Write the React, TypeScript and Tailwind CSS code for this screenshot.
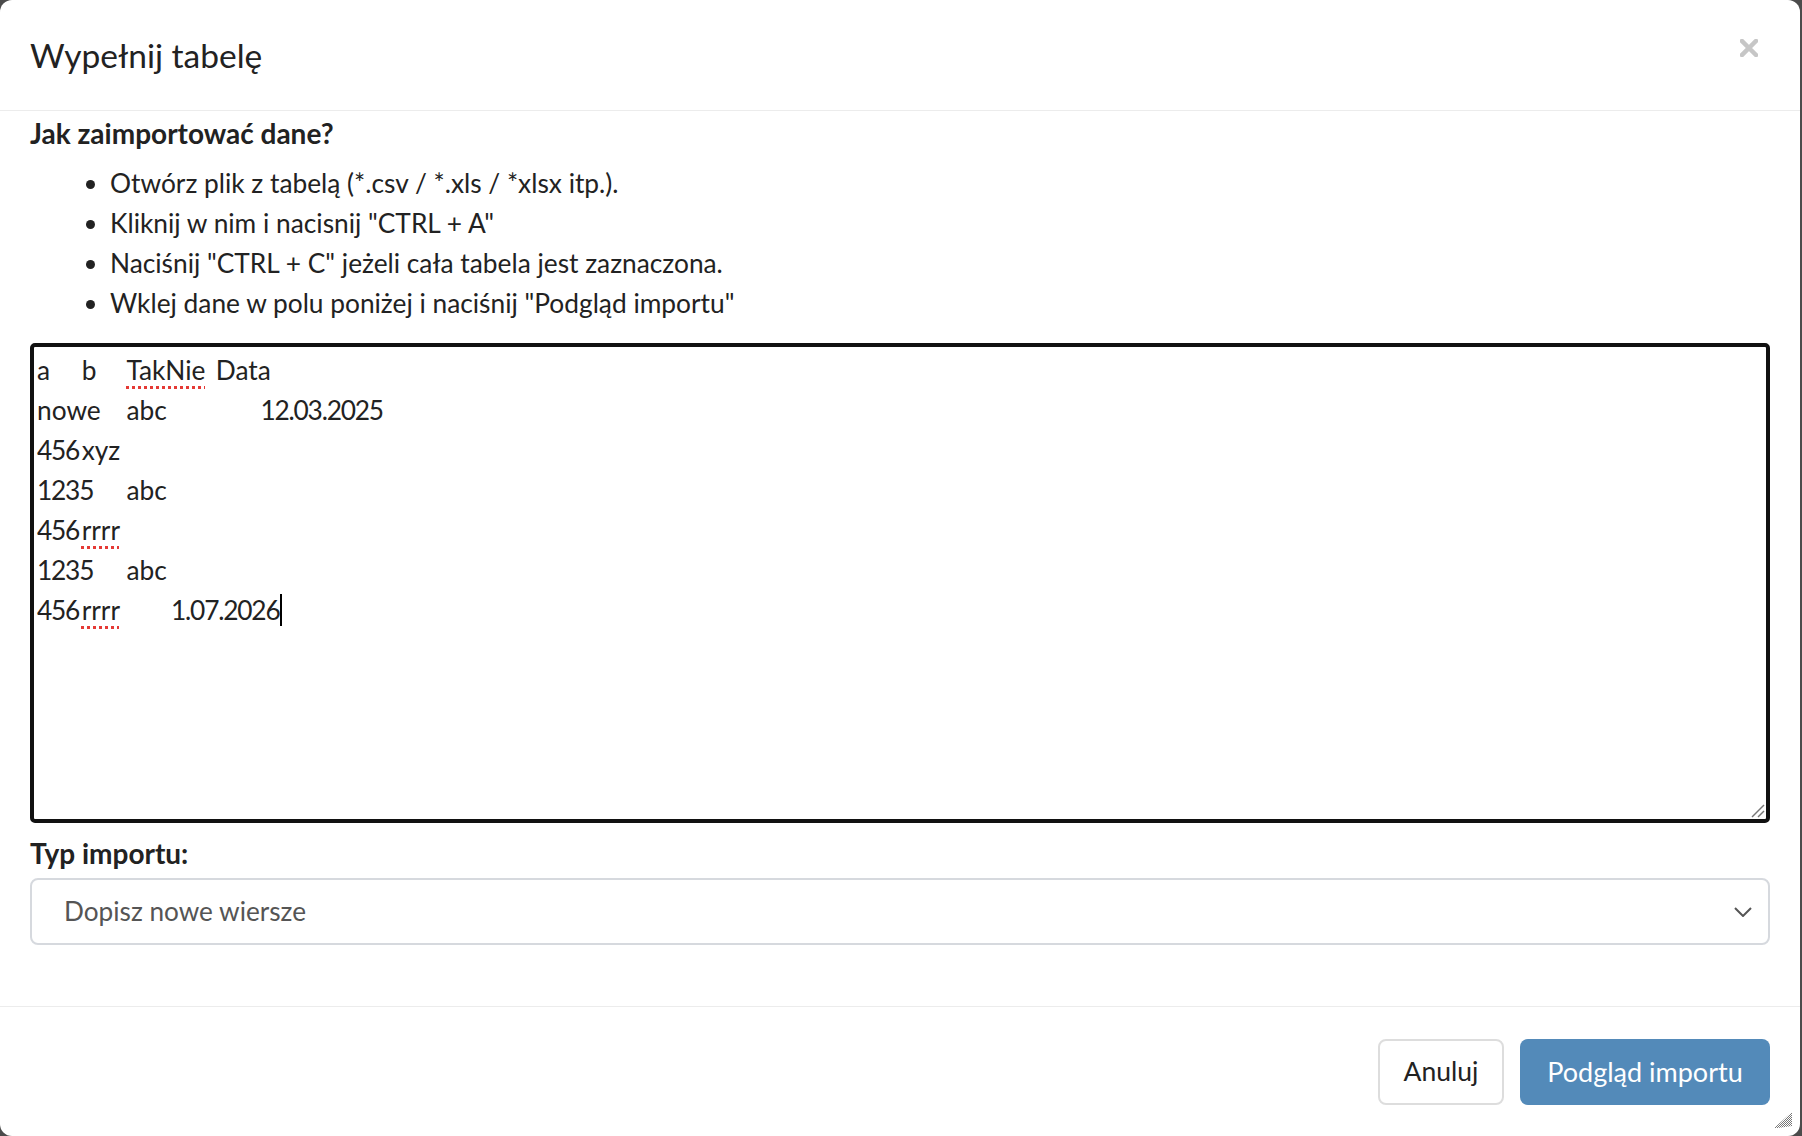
import React from "react";

type Cell = { col: number; text: string; spell?: boolean; num?: boolean };

// column starts for the pasted rows (tab stops ~44.7px apart)
const colStart: Record<number, string> = {
  0: "col-start-1",
  1: "col-start-2",
  2: "col-start-3",
  3: "col-start-4",
  4: "col-start-5",
  5: "col-start-6",
};

const rows: Cell[][] = [
  [
    { col: 0, text: "a" },
    { col: 1, text: "b" },
    { col: 2, text: "TakNie", spell: true },
    { col: 4, text: "Data" },
  ],
  [
    { col: 0, text: "nowe" },
    { col: 2, text: "abc" },
    { col: 5, text: "12.03.2025", num: true },
  ],
  [
    { col: 0, text: "456", num: true },
    { col: 1, text: "xyz" },
  ],
  [
    { col: 0, text: "1235", num: true },
    { col: 2, text: "abc" },
  ],
  [
    { col: 0, text: "456", num: true },
    { col: 1, text: "rrrr", spell: true },
  ],
  [
    { col: 0, text: "1235", num: true },
    { col: 2, text: "abc" },
  ],
  [
    { col: 0, text: "456", num: true },
    { col: 1, text: "rrrr", spell: true },
    { col: 3, text: "1.07.2026", num: true },
  ],
];

const steps = [
  "Otwórz plik z tabelą (*.csv / *.xls / *xlsx itp.).",
  'Kliknij w nim i nacisnij "CTRL + A"',
  'Naciśnij "CTRL + C" jeżeli cała tabela jest zaznaczona.',
  'Wklej dane w polu poniżej i naciśnij "Podgląd importu"',
];

function PasteArea() {
  return (
    <div className="relative mt-[20px] h-[480px] rounded-[5px] border-4 border-[#111111] px-[3px] pt-[3px] text-[26.3px] leading-[40px] text-[#222222]">
      {rows.map((row, i) => (
        <div key={i} className="grid h-[40px] grid-cols-[repeat(16,44.7px)]">
          {row.map((cell, j) => (
            <span
              key={j}
              className={`${colStart[cell.col]} col-span-1 whitespace-nowrap ${cell.num ? "tracking-[-1.2px]" : ""}`}
            >
              {cell.spell ? (
                <span className="underline decoration-[#e53935] decoration-dotted decoration-[2.5px] underline-offset-[6px]">
                  {cell.text}
                </span>
              ) : (
                cell.text
              )}
              {i === rows.length - 1 && j === row.length - 1 && (
                <span className="ml-[1px] inline-block h-[32px] w-[2px] bg-black align-[-6px]" />
              )}
            </span>
          ))}
        </div>
      ))}
      {/* resize handle */}
      <svg className="absolute bottom-[1px] right-[1px]" width="14" height="14" viewBox="0 0 14 14">
        <line x1="13" y1="1" x2="1" y2="13" stroke="#777" strokeWidth="1.5" />
        <line x1="13" y1="7" x2="7" y2="13" stroke="#777" strokeWidth="1.5" />
      </svg>
    </div>
  );
}

export default function App() {
  return (
    <div
      className="h-[1136px] w-[1802px] bg-[#4b4b4b] pr-[2px]"
      style={{ fontFamily: "Lato, 'Noto Sans', sans-serif" }}
    >
      <div className="relative flex h-full flex-col rounded-[12px] bg-white">
        {/* Header */}
        <div className="flex h-[111px] shrink-0 items-center justify-between border-b border-[#ececec] pl-[30px] pr-[42px]">
          <h4 className="pt-[2px] text-[33.5px] leading-none text-[#222222]">Wypełnij tabelę</h4>
          <svg width="18" height="18" viewBox="0 0 18 18" className="mb-[14px]">
            <path d="M2 2 L16 16 M16 2 L2 16" stroke="#c6c6c6" strokeWidth="4.5" strokeLinecap="square" />
          </svg>
        </div>

        {/* Body */}
        <div className="px-[30px] pt-[2px]">
          <p className="text-[28px] font-bold leading-[40px] text-[#222222]">Jak zaimportować dane?</p>
          <ul className="mt-[10px] list-disc pl-[80px] text-[26.3px] leading-[40px] text-[#222222]">
            {steps.map((s) => (
              <li key={s}>{s}</li>
            ))}
          </ul>

          <PasteArea />

          <p className="mt-[10px] text-[28px] font-bold leading-[40px] text-[#222222]">Typ importu:</p>
          <div className="mt-[5px] flex h-[67px] items-center justify-between rounded-[8px] border-2 border-[#d6d9de] pl-[32px] pr-[16px]">
            <span className="text-[26.2px] text-[#555555]">Dopisz nowe wiersze</span>
            <svg width="18" height="10" viewBox="0 0 18 10">
              <polyline points="1,1 9,9 17,1" fill="none" stroke="#555" strokeWidth="2" />
            </svg>
          </div>
        </div>

        {/* Footer */}
        <div className="mt-auto flex h-[130px] shrink-0 items-start justify-end gap-[16px] border-t border-[#ececec] px-[30px] pt-[32px]">
          <button
            type="button"
            className="h-[66px] w-[126px] rounded-[8px] border-2 border-[#dddddd] bg-white text-[26.5px] text-[#222222]"
          >
            Anuluj
          </button>
          <button
            type="button"
            className="h-[66px] w-[250px] rounded-[8px] bg-[#538ab9] text-[27px] text-white"
          >
            Podgląd importu
          </button>
        </div>

        {/* dialog resize grip */}
        <svg className="absolute bottom-[8px] right-[8px]" width="18" height="16" viewBox="0 0 18 16">
          <defs>
            <pattern id="chk" width="2" height="2" patternUnits="userSpaceOnUse">
              <rect width="1" height="1" fill="#777" />
              <rect x="1" y="1" width="1" height="1" fill="#777" />
            </pattern>
          </defs>
          <polygon points="18,0 18,14 4,16 0,16" fill="url(#chk)" />
        </svg>
      </div>
    </div>
  );
}
